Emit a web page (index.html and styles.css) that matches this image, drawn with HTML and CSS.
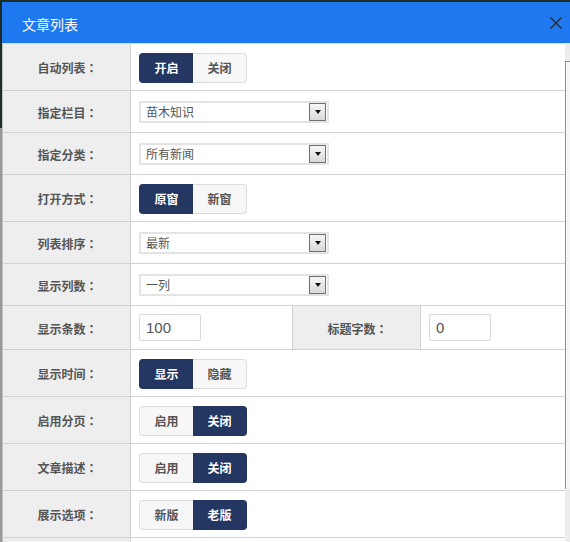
FILE: index.html
```html
<!DOCTYPE html>
<html lang="zh-CN">
<head>
<meta charset="utf-8">
<title>文章列表</title>
<link rel="stylesheet" href="styles.css">
</head>
<body>
<div class="page">
  <div class="modal">
    <div class="header">
      <span class="title">文章列表</span>
      <svg class="close" width="14" height="14" viewBox="0 0 14 14"><path d="M1.5 1.5 L12.5 12.5 M12.5 1.5 L1.5 12.5" stroke="#2b2b2b" stroke-width="1.4" fill="none"/></svg>
    </div>
    <div class="body">
      <div class="form">
        <div class="row tall">
          <div class="label">自动列表<span class="colon">：</span></div>
          <div class="field"><div class="toggle"><span class="opt on">开启</span><span class="opt">关闭</span></div></div>
        </div>
        <div class="row short">
          <div class="label">指定栏目<span class="colon">：</span></div>
          <div class="field"><div class="select"><span class="val">苗木知识</span><span class="arrow"></span></div></div>
        </div>
        <div class="row short">
          <div class="label">指定分类<span class="colon">：</span></div>
          <div class="field"><div class="select"><span class="val">所有新闻</span><span class="arrow"></span></div></div>
        </div>
        <div class="row tall">
          <div class="label">打开方式<span class="colon">：</span></div>
          <div class="field"><div class="toggle"><span class="opt on">原窗</span><span class="opt">新窗</span></div></div>
        </div>
        <div class="row short">
          <div class="label">列表排序<span class="colon">：</span></div>
          <div class="field"><div class="select"><span class="val">最新</span><span class="arrow"></span></div></div>
        </div>
        <div class="row short">
          <div class="label">显示列数<span class="colon">：</span></div>
          <div class="field"><div class="select"><span class="val">一列</span><span class="arrow"></span></div></div>
        </div>
        <div class="row mid split">
          <div class="label">显示条数<span class="colon">：</span></div>
          <div class="field"><input class="num" type="text" value="100"></div>
          <div class="label label2">标题字数<span class="colon">：</span></div>
          <div class="field"><input class="num" type="text" value="0"></div>
        </div>
        <div class="row tall">
          <div class="label">显示时间<span class="colon">：</span></div>
          <div class="field"><div class="toggle"><span class="opt on">显示</span><span class="opt">隐藏</span></div></div>
        </div>
        <div class="row tall">
          <div class="label">启用分页<span class="colon">：</span></div>
          <div class="field"><div class="toggle"><span class="opt">启用</span><span class="opt on">关闭</span></div></div>
        </div>
        <div class="row tall">
          <div class="label">文章描述<span class="colon">：</span></div>
          <div class="field"><div class="toggle"><span class="opt">启用</span><span class="opt on">关闭</span></div></div>
        </div>
        <div class="row tall">
          <div class="label">展示选项<span class="colon">：</span></div>
          <div class="field"><div class="toggle"><span class="opt">新版</span><span class="opt on">老版</span></div></div>
        </div>
        <div class="row tall">
          <div class="label"></div>
          <div class="field"></div>
        </div>
      </div>
      <div class="scrollbar"><div class="thumb"></div></div>
    </div>
  </div>
</div>
</body>
</html>
```
FILE: styles.css
```css
html, body {
  margin: 0;
  padding: 0;
}
body {
  background: #1d2b25;
  font-family: "Noto Sans CJK SC", "Noto Sans", sans-serif;
}
.page {
  height: 542px;
  width: 570px;
  overflow: hidden;
  background: linear-gradient(to bottom, #1c2d27 0, #1c2d27 128px, #9a9a9a 128px, #9a9a9a 100%);
}
.modal {
  margin: 2px 0 0 2px;
  width: 568px;
  background: #fff;
}
.header {
  height: 41px;
  background: #1e78f0;
  display: flex;
  align-items: center;
  justify-content: space-between;
  padding: 0 7px 0 20px;
}
.title {
  color: #fff;
  font-size: 14px;
  padding-top: 3px;
}
.close {
  display: block;
  margin-top: 1px;
}
.body {
  display: flex;
  align-items: flex-start;
}
.form {
  width: 563px;
  border-top: 1px solid #dcdcdc;
  border-left: 1px solid #c4c4c4;
  box-sizing: border-box;
}
.row {
  display: grid;
  grid-template-columns: 128px 1fr;
  border-bottom: 1px solid #d2d2d2;
  box-sizing: border-box;
}
.row.tall { height: 47px; }
.row.short { height: 42px; }
.row.mid { height: 44px; }
.row.split {
  grid-template-columns: 128px 161px 129px 1fr;
}
.label {
  background: #eeeeee;
  border-right: 1px solid #d2d2d2;
  box-sizing: border-box;
  display: flex;
  align-items: center;
  justify-content: center;
  font-size: 12px;
  font-weight: bold;
  color: #555;
  padding-left: 2px;
  padding-top: 1px;
}
.colon {
  font-family: "Noto Sans CJK TC", "Noto Sans CJK SC", sans-serif;
  text-spacing-trim: space-all;
}
.label2 {
  border-left: 1px solid #d2d2d2;
}
.field {
  display: flex;
  align-items: center;
  padding-left: 8px;
}
.toggle {
  display: flex;
  height: 30px;
  margin-top: 1px;
}
.opt {
  width: 54px;
  box-sizing: border-box;
  display: flex;
  align-items: center;
  justify-content: center;
  font-size: 12px;
  font-weight: bold;
  color: #555;
  background: #f7f7f7;
  border: 1px solid #dcdcdc;
}
.opt:first-child {
  border-radius: 4px 0 0 4px;
  border-right: none;
}
.opt:last-child {
  border-radius: 0 4px 4px 0;
  border-left: none;
}
.opt.on {
  background: #243662;
  border-color: #243662;
  color: #fff;
}
.select {
  width: 190px;
  height: 22px;
  box-sizing: border-box;
  border: 2px solid #e4e4e4;
  display: flex;
  align-items: center;
  justify-content: space-between;
  background: #fff;
}
.val {
  font-size: 12px;
  color: #555;
  padding-left: 5px;
}
.arrow {
  width: 17px;
  height: 18px;
  box-sizing: border-box;
  border: 1px solid #707070;
  background: linear-gradient(#f6f6f6, #d9d9d9);
  display: flex;
  align-items: center;
  justify-content: center;
  margin-right: 1px;
}
.arrow::after {
  content: "";
  display: block;
  width: 0;
  height: 0;
  border-left: 3.5px solid transparent;
  border-right: 3.5px solid transparent;
  border-top: 4px solid #111;
  margin-top: 1px;
}
.num {
  width: 62px;
  height: 27px;
  box-sizing: border-box;
  border: 1px solid #d9d9d9;
  border-radius: 2px;
  padding: 0 0 0 6px;
  margin: 0;
  font-family: "Liberation Sans", Arial, sans-serif;
  font-size: 15px;
  color: #555;
  outline: none;
  background: #fff;
}
.scrollbar {
  width: 5px;
  height: 500px;
  background: #ececec;
}
.thumb {
  margin-top: 18px;
  height: 427px;
  border-left: 1px solid #8f8f8f;
  border-top: 1px solid #8f8f8f;
  background: #f6f6f6;
}
```
